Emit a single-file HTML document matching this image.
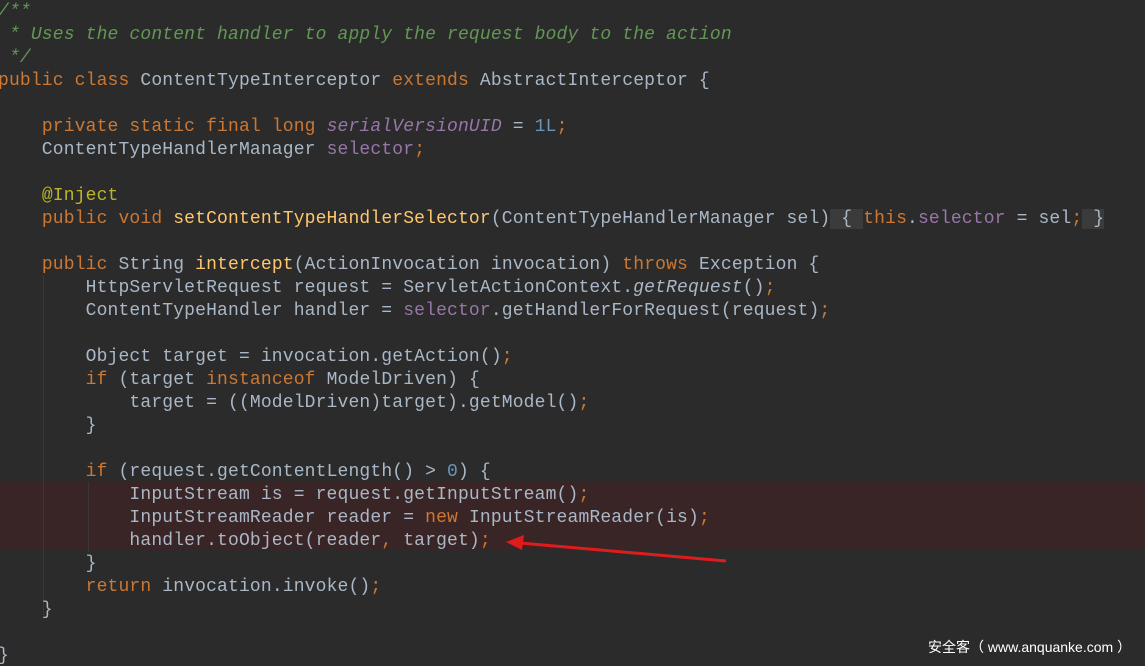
<!DOCTYPE html>
<html><head><meta charset="utf-8"><style>
html,body{margin:0;padding:0;background:#2b2b2b;width:1145px;height:666px;overflow:hidden;position:relative}
pre{position:absolute;left:-2px;top:1px;margin:0;font-family:"Liberation Mono",monospace;font-size:18px;line-height:23px;letter-spacing:0.15px;color:#a9b7c6;z-index:2}
.k{color:#cc7832}.c{color:#629755;font-style:italic}.f{color:#9876aa}.fi{color:#9876aa;font-style:italic}.n{color:#6897bb}.m{color:#ffc66d}.a{color:#bbb529}.i{font-style:italic}
.fb{background:#3b3b3b}
.hl{position:absolute;left:0;top:481px;width:1145px;height:69px;background:#3a2526;z-index:1}
.g{position:absolute;width:1px;background:#383838;z-index:1}
.wm{position:absolute;left:928px;top:637px;font-family:"Liberation Sans","Noto Sans CJK SC",sans-serif;font-size:14px;color:#fff;z-index:3}
</style></head><body>
<div class="hl"></div>
<div class="g" style="left:43px;top:275px;height:340px"></div>
<div class="g" style="left:88px;top:482px;height:70px"></div>
<pre><span class="c">/**
 * Uses the content handler to apply the request body to the action
 */</span>
<span class="k">public class </span>ContentTypeInterceptor <span class="k">extends </span>AbstractInterceptor {

    <span class="k">private static final long </span><span class="fi">serialVersionUID </span>= <span class="n">1L</span><span class="k">;</span>
    ContentTypeHandlerManager <span class="f">selector</span><span class="k">;</span>

    <span class="a">@Inject</span>
    <span class="k">public void </span><span class="m">setContentTypeHandlerSelector</span>(ContentTypeHandlerManager sel)<span class="fb"> { </span><span class="k">this</span>.<span class="f">selector </span>= sel<span class="k">;</span><span class="fb"> }</span>

    <span class="k">public </span>String <span class="m">intercept</span>(ActionInvocation invocation) <span class="k">throws </span>Exception {
        HttpServletRequest request = ServletActionContext.<span class="i">getRequest</span>()<span class="k">;</span>
        ContentTypeHandler handler = <span class="f">selector</span>.getHandlerForRequest(request)<span class="k">;</span>

        Object target = invocation.getAction()<span class="k">;</span>
        <span class="k">if </span>(target <span class="k">instanceof </span>ModelDriven) {
            target = ((ModelDriven)target).getModel()<span class="k">;</span>
        }

        <span class="k">if </span>(request.getContentLength() &gt; <span class="n">0</span>) {
            InputStream is = request.getInputStream()<span class="k">;</span>
            InputStreamReader reader = <span class="k">new </span>InputStreamReader(is)<span class="k">;</span>
            handler.toObject(reader<span class="k">, </span>target)<span class="k">;</span>
        }
        <span class="k">return </span>invocation.invoke()<span class="k">;</span>
    }

}</pre>
<svg style="position:absolute;left:0;top:0;z-index:3" width="1145" height="666">
<line x1="726" y1="561" x2="520" y2="543" stroke="#e01b1b" stroke-width="3"/>
<polygon points="506,542 524,535 522,550" fill="#e01b1b"/>
</svg>
<div class="wm">安全客（ www.anquanke.com ）</div>
</body></html>
